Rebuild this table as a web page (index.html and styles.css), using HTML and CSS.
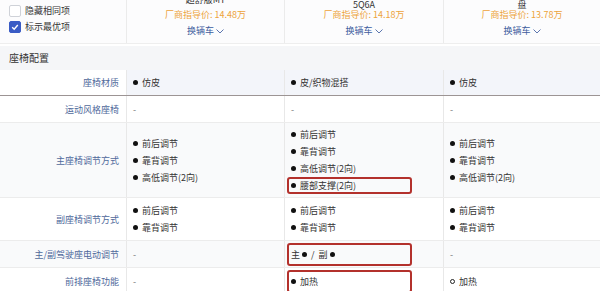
FILE: index.html
```html
<!DOCTYPE html>
<html lang="zh">
<head>
<meta charset="utf-8">
<link rel="stylesheet" href="styles.css">
</head>
<body>
<div class="page">
  <div class="head">
    <div class="hcell opts">
      <div class="opt"><span class="box"></span>隐藏相同项</div>
      <div class="opt"><span class="box on"><svg width="10" height="10" viewBox="0 0 10 10"><polyline points="2.2,5.2 4.2,7.2 7.8,3" fill="none" stroke="#fff" stroke-width="1.4"/></svg></span>标示最优项</div>
    </div>
    <div class="hcell car">
      <div class="name lift">超舒版MT</div>
      <div class="price">厂商指导价: 14.48万</div>
      <div class="swap">换辆车<svg width="8" height="5" viewBox="0 0 8 5"><polyline points="0.5,0.5 4,4 7.5,0.5" fill="none" stroke="#4a66a6" stroke-width="0.9"/></svg></div>
    </div>
    <div class="hcell car">
      <div class="name">5Q6A</div>
      <div class="price">厂商指导价: 14.18万</div>
      <div class="swap">换辆车<svg width="8" height="5" viewBox="0 0 8 5"><polyline points="0.5,0.5 4,4 7.5,0.5" fill="none" stroke="#4a66a6" stroke-width="0.9"/></svg></div>
    </div>
    <div class="hcell car last">
      <div class="name">盘</div>
      <div class="price">厂商指导价: 13.78万</div>
      <div class="swap">换辆车<svg width="8" height="5" viewBox="0 0 8 5"><polyline points="0.5,0.5 4,4 7.5,0.5" fill="none" stroke="#4a66a6" stroke-width="0.9"/></svg></div>
    </div>
  </div>

  <div class="section">座椅配置</div>

  <div class="row hl h26">
    <div class="label">座椅材质</div>
    <div class="cell"><div class="item"><span class="dot"></span>仿皮</div></div>
    <div class="cell"><div class="item"><span class="dot"></span>皮/织物混搭</div></div>
    <div class="cell last"><div class="item"><span class="dot"></span>仿皮</div></div>
  </div>

  <div class="row h27">
    <div class="label">运动风格座椅</div>
    <div class="cell"><div class="item dash">-</div></div>
    <div class="cell"><div class="item dash">-</div></div>
    <div class="cell last"><div class="item dash">-</div></div>
  </div>

  <div class="row alt h75">
    <div class="label">主座椅调节方式</div>
    <div class="cell">
      <div class="item"><span class="dot"></span>前后调节</div>
      <div class="item"><span class="dot"></span>靠背调节</div>
      <div class="item"><span class="dot"></span>高低调节(2向)</div>
    </div>
    <div class="cell">
      <div class="item"><span class="dot"></span>前后调节</div>
      <div class="item"><span class="dot"></span>靠背调节</div>
      <div class="item"><span class="dot"></span>高低调节(2向)</div>
      <div class="item mark"><span class="dot"></span>腰部支撑(2向)</div>
    </div>
    <div class="cell last">
      <div class="item"><span class="dot"></span>前后调节</div>
      <div class="item"><span class="dot"></span>靠背调节</div>
      <div class="item"><span class="dot"></span>高低调节(2向)</div>
    </div>
  </div>

  <div class="row h43">
    <div class="label">副座椅调节方式</div>
    <div class="cell">
      <div class="item"><span class="dot"></span>前后调节</div>
      <div class="item"><span class="dot"></span>靠背调节</div>
    </div>
    <div class="cell">
      <div class="item"><span class="dot"></span>前后调节</div>
      <div class="item"><span class="dot"></span>靠背调节</div>
    </div>
    <div class="cell last">
      <div class="item"><span class="dot"></span>前后调节</div>
      <div class="item"><span class="dot"></span>靠背调节</div>
    </div>
  </div>

  <div class="row alt h27">
    <div class="label">主/副驾驶座电动调节</div>
    <div class="cell"><div class="item dash">-</div></div>
    <div class="cell"><div class="item mark full">主<span class="dot in"></span><span class="sep">/</span>副<span class="dot in"></span></div></div>
    <div class="cell last"><div class="item dash">-</div></div>
  </div>

  <div class="row h27 open">
    <div class="label">前排座椅功能</div>
    <div class="cell"><div class="item dash">-</div></div>
    <div class="cell"><div class="item mark full"><span class="dot"></span>加热</div></div>
    <div class="cell last"><div class="item"><span class="dot hollow"></span>加热</div></div>
  </div>
</div>
</body>
</html>
```

FILE: styles.css
```css
* { box-sizing: border-box; }
html, body { margin: 0; padding: 0; background: #fff; }
body {
  font-family: "Noto Sans CJK SC", "Noto Sans", sans-serif;
  font-size: 9px;
  color: #333;
  width: 600px;
  height: 291px;
  overflow: hidden;
}
.page { width: 600px; }

.head {
  display: grid;
  grid-template-columns: 127px 158px 159px 1fr;
  grid-template-rows: 43px;
  height: 44px;
  border-bottom: 1px solid #eeeeee;
  background: #fcfcfd;
  overflow: hidden;
}
.hcell { border-right: 1px solid #ebebeb; min-height: 0; overflow: hidden; }
.hcell.last { border-right: none; }

.opts {
  display: flex;
  flex-direction: column;
  gap: 4px;
  padding: 5px 0 0 9px;
}
.opt {
  display: flex;
  align-items: center;
  height: 12px;
  line-height: 12px;
  color: #333;
}
.box {
  width: 12px;
  height: 12px;
  border: 1px solid #cfd2d8;
  border-radius: 2px;
  background: #fff;
  margin-right: 4px;
  display: flex;
  align-items: center;
  justify-content: center;
}
.box.on { background: #3a5cc5; border-color: #3a5cc5; }

.car {
  display: flex;
  flex-direction: column;
  justify-content: flex-end;
  align-items: center;
  padding-bottom: 5px;
  text-align: center;
}
.name { line-height: 10px; font-size: 9px; color: #333; white-space: nowrap; flex: none; }
.name.lift { margin-bottom: 5px; }
.price {
  line-height: 10px;
  color: #eda33a;
  margin-bottom: 4px;
  white-space: nowrap;
  flex: none;
}
.swap {
  line-height: 14px;
  color: #3e5c9e;
  display: flex;
  align-items: center;
  gap: 2px;
  flex: none;
}

.section {
  margin-top: 2px;
  height: 24px;
  line-height: 24px;
  background: #f5f6f8;
  padding-left: 9px;
  font-size: 10px;
  color: #333;
}

.row {
  display: grid;
  grid-template-columns: 127px 158px 159px 1fr;
  border-bottom: 1px solid #ececec;
  background: #fff;
}
.row.alt { background: #f9fafb; }
.row.hl { border-bottom-color: #9c9494; }
.row.hl .cell { background: #f3f5fa; }
.row.open { border-bottom: none; }
.h26 { height: 26px; }
.h27 { height: 27px; }
.h75 { height: 75px; }
.h43 { height: 43px; }

.label {
  border-right: 1px solid #e8e8e8;
  display: flex;
  align-items: center;
  justify-content: flex-end;
  padding-right: 7px;
  color: #50699b;
  white-space: nowrap;
}
.cell {
  border-right: 1px solid #e8e8e8;
  display: flex;
  flex-direction: column;
  justify-content: center;
  padding-left: 6px;
}
.cell.last { border-right: none; }

.item {
  display: flex;
  align-items: center;
  line-height: 17px;
  height: 17px;
  white-space: nowrap;
  color: #333;
}
.item.dash { color: #777; }
.dot {
  width: 5px;
  height: 5px;
  border-radius: 50%;
  background: #111;
  margin-right: 4px;
  flex: none;
}
.dot.in { margin: 0 0 0 2px; }
.dot.hollow { background: transparent; border: 1px solid #222; }
.sep { margin: 0 4px; }

.item.mark {
  border: 2px solid #b3312c;
  border-radius: 3px;
  width: 125px;
  margin-left: -4px;
  padding-left: 2px;
}
.item.mark.full { height: 23px; }
```
